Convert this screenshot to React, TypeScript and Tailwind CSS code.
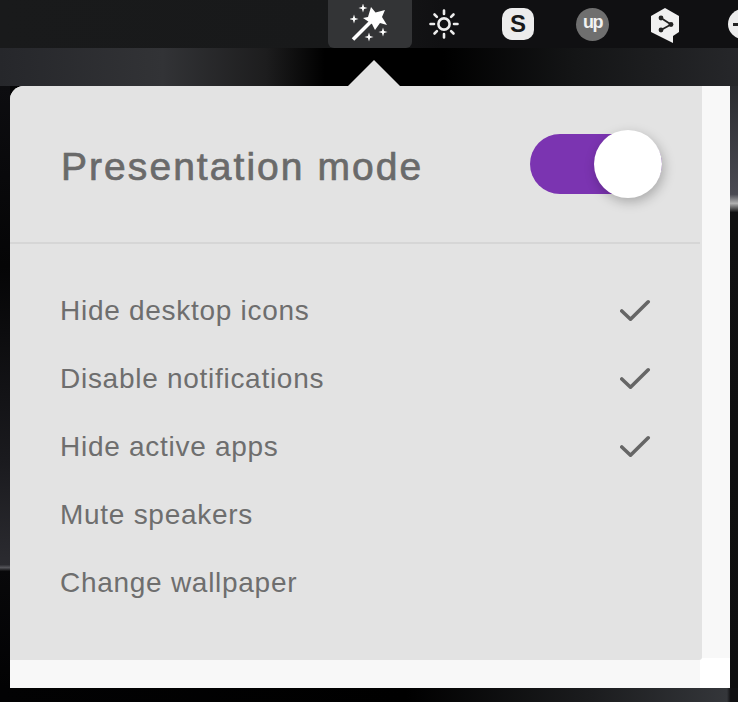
import React from "react";

const items = [
  { label: "Hide desktop icons", on: true },
  { label: "Disable notifications", on: true },
  { label: "Hide active apps", on: true },
  { label: "Mute speakers", on: false },
  { label: "Change wallpaper", on: false },
];

function Sparkle({ x, y, r }: { x: number; y: number; r: number }) {
  const k = r * 0.24;
  return (
    <path
      d={`M${x} ${y - r} L${x + k} ${y - k} L${x + r} ${y} L${x + k} ${y + k} L${x} ${y + r} L${x - k} ${y + k} L${x - r} ${y} L${x - k} ${y - k} Z`}
    />
  );
}

function Wand() {
  return (
    <svg width="40" height="40" viewBox="0 0 40 40" fill="white">
      <path d="M3 35.5 L21 17.5" stroke="white" strokeWidth="3.6" />
      <path d="M21 3 L25.5 8.5 L35 6 L32 13 L37 21 L30 19 L25 26 L22 20 L13 14 L18 13 Z" />
      <Sparkle x={13} y={4} r={4.5} />
      <Sparkle x={4} y={15} r={4.5} />
      <Sparkle x={19} y={33} r={4.5} />
      <Sparkle x={33} y={28} r={4.5} />
    </svg>
  );
}

function Sun() {
  return (
    <svg width="32" height="32" viewBox="0 0 32 32" fill="none" stroke="#ececec" strokeWidth="2.6" strokeLinecap="round">
      <circle cx="16" cy="16" r="5.6" />
      <path d="M16 2.5V6M16 26v3.5M2.5 16H6M26 16h3.5M6.5 6.5l2.4 2.4M23.1 23.1l2.4 2.4M6.5 25.5l2.4-2.4M23.1 8.9l2.4-2.4" />
    </svg>
  );
}

function Deepl() {
  return (
    <svg width="30" height="38" viewBox="0 0 30 38" fill="none">
      <path d="M15 1 L29 9 V25 L23 29 L23 36 L15 32 L1 25 V9 Z" fill="#f0f0f0" strokeLinejoin="round" />
      <path d="M11 11 L21 17.5 L11 23" stroke="#222" strokeWidth="1.8" />
      <circle cx="11" cy="11" r="2.4" fill="#222" />
      <circle cx="21" cy="17.5" r="2.4" fill="#222" />
      <circle cx="11" cy="23" r="2.4" fill="#222" />
    </svg>
  );
}

function Check() {
  return (
    <svg width="32" height="24" viewBox="0 0 32 24" fill="none" stroke="#666666" strokeWidth="3.6" strokeLinecap="round" strokeLinejoin="round">
      <path d="M1.8 12 L10.5 20.2 L28.2 2.8" />
    </svg>
  );
}

export default function App() {
  return (
    <div className="w-[738px] h-[702px] overflow-hidden flex flex-col bg-[#050506] font-['Liberation_Sans',Arial,sans-serif]">
      <header className="h-12 shrink-0 flex items-center pl-[328px] bg-[linear-gradient(90deg,#191a1b_0%,#18191a_45%,#101012_60%,#101012_100%)]">
        <div className="w-[84px] h-12 shrink-0 rounded-b-md bg-[#333436] flex items-center justify-center">
          <Wand />
        </div>
        <div className="w-[64px] shrink-0 flex justify-center">
          <Sun />
        </div>
        <div className="ml-[26px] w-[32px] h-[32px] shrink-0 rounded-[10px] bg-[#ececec] flex items-center justify-center text-[#18191a] text-[24px] font-bold">
          S
        </div>
        <div className="ml-[42px] w-[33px] h-[33px] shrink-0 rounded-full bg-[#6f6f6f] flex items-center justify-center text-[#f2f2f2] text-[18px] font-bold tracking-[-1.5px] pb-[3px]">
          up
        </div>
        <div className="ml-[41px] shrink-0 flex items-center pt-[3px]">
          <Deepl />
        </div>
        <div className="ml-[48px] w-[30px] h-[30px] shrink-0 rounded-full bg-[#ececec] flex items-center">
          <div className="w-[7px] h-[3px] bg-[#222222] ml-[5px]" />
        </div>
      </header>

      <div className="h-[38px] shrink-0 bg-[linear-gradient(90deg,#26272b_0%,#323336_22%,#1d1d1e_36%,#000000_44%,#000000_60%,#141516_78%,#26272a_100%)]" />

      <main className="flex h-[602px] shrink-0">
        <aside className="w-[10px] shrink-0 bg-[linear-gradient(180deg,#0d0d10_0%,#050506_30%,#1a1a1e_62%,#2b2b30_79.5%,#55555a_80%,#08080a_80.6%,#020203_100%)]" />
        <div className="relative w-[720px] shrink-0 rounded-tl-[14px] bg-[#f8f8f8] pr-[28px] pb-[28px]">
          <div className="absolute left-[338px] -top-[26px] w-0 h-0 border-l-[26px] border-r-[26px] border-b-[26px] border-l-transparent border-r-transparent border-b-[#e3e3e3]" />
          <div className="absolute right-0 bottom-0 w-[30px] h-[30px] bg-white" />
          <section className="relative h-[574px] rounded-tl-[14px] rounded-br-[3px] bg-[#e3e3e3]">
            <div className="h-[158px] mr-[2px] pl-[51px] pr-[38px] flex items-center justify-between border-b-2 border-[#d6d6d6]">
              <h1 className="text-[39px] leading-none font-normal text-[#6a6a6a] tracking-[2.05px] [-webkit-text-stroke:0.7px_#6a6a6a] pt-[4px]">
                Presentation mode
              </h1>
              <div className="relative w-[132px] h-[60px] rounded-full bg-[#7b34b1]">
                <div className="absolute right-0 -top-[4px] w-[68px] h-[68px] rounded-full bg-white shadow-[2px_4px_12px_rgba(0,0,0,0.25)]" />
              </div>
            </div>
            <ul className="pt-[33px] pl-[50px] pr-[50px]">
              {items.map((it) => (
                <li key={it.label} className="h-[68px] flex items-center justify-between text-[#6e6e6e] text-[28px] tracking-[0.72px]">
                  <span>{it.label}</span>
                  {it.on ? <Check /> : null}
                </li>
              ))}
            </ul>
          </section>
        </div>
        <aside className="w-[8px] shrink-0 bg-[linear-gradient(180deg,#2a2b2f_0%,#4a4a52_18%,#b0b0b0_19.5%,#101011_21%,#0e0e0f_100%)]" />
      </main>

      <footer className="flex-1 bg-[linear-gradient(90deg,#020203_0%,#000000_55%,#1b1c1e_80%,#34363a_98.5%,#101012_99%,#101012_100%)]" />
    </div>
  );
}
